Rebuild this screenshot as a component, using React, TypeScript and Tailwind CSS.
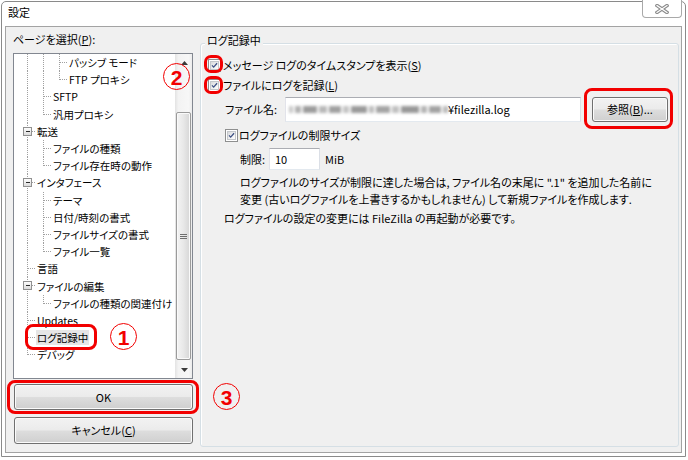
import React from "react";

type Cell = "v" | "T" | "L" | "TM" | " ";
type Row = { label: string; cells: Cell[]; selected?: boolean };

const rows: Row[] = [
  { label: "パッシブ モード", cells: ["v", "v", "T"] },
  { label: "FTP プロキシ", cells: ["v", "v", "L"] },
  { label: "SFTP", cells: ["v", "T"] },
  { label: "汎用プロキシ", cells: ["v", "L"] },
  { label: "転送", cells: ["TM"] },
  { label: "ファイルの種類", cells: ["v", "T"] },
  { label: "ファイル存在時の動作", cells: ["v", "L"] },
  { label: "インタフェース", cells: ["TM"] },
  { label: "テーマ", cells: ["v", "T"] },
  { label: "日付/時刻の書式", cells: ["v", "T"] },
  { label: "ファイルサイズの書式", cells: ["v", "T"] },
  { label: "ファイル一覧", cells: ["v", "L"] },
  { label: "言語", cells: ["T"] },
  { label: "ファイルの編集", cells: ["TM"] },
  { label: "ファイルの種類の関連付け", cells: ["v", "L"] },
  { label: "Updates", cells: ["T"] },
  { label: "ログ記録中", cells: ["T"], selected: true },
  { label: "デバッグ", cells: ["L"] },
];

const blurBits = [
  { w: 4, c: "#c8c8c8" },
  { w: 6, c: "#b0b0b0" },
  { w: 14, c: "#9c9c9c" },
  { w: 8, c: "#b8b8b8" },
  { w: 12, c: "#a0a0a0" },
  { w: 6, c: "#c4c4c4" },
  { w: 16, c: "#9a9a9a" },
  { w: 5, c: "#bcbcbc" },
  { w: 14, c: "#a4a4a4" },
  { w: 7, c: "#c0c0c0" },
  { w: 18, c: "#989898" },
  { w: 6, c: "#b4b4b4" },
  { w: 12, c: "#a2a2a2" },
  { w: 8, c: "#bababa" },
  { w: 10, c: "#9e9e9e" },
];

function TreeCell({ c }: { c: Cell }) {
  const dot = { stroke: "#a0a0a0", strokeWidth: 1, strokeDasharray: "1 1", shapeRendering: "crispEdges" as const };
  return (
    <svg width="16" height="17" viewBox="0 0 16 17" preserveAspectRatio="none" className="shrink-0 h-full w-[16px]">
      {c === "v" && <line x1="8.5" y1="0" x2="8.5" y2="17" style={dot} />}
      {(c === "T" || c === "TM") && <line x1="8.5" y1="0" x2="8.5" y2="17" style={dot} />}
      {c === "L" && <line x1="8.5" y1="0" x2="8.5" y2="9" style={dot} />}
      {(c === "T" || c === "L") && <line x1="9" y1="8.5" x2="16" y2="8.5" style={dot} />}
      {c === "TM" && (
        <>
          <line x1="13" y1="8.5" x2="16" y2="8.5" style={dot} />
          <defs>
            <linearGradient id="mb" x1="0" y1="0" x2="0" y2="1">
              <stop offset="0" stopColor="#ffffff" />
              <stop offset="1" stopColor="#d8d8d8" />
            </linearGradient>
          </defs>
          <rect x="4.5" y="4.5" width="8" height="8" fill="url(#mb)" stroke="#919191" shapeRendering="crispEdges" />
          <line x1="6.5" y1="8.5" x2="11" y2="8.5" stroke="#2b2b2b" shapeRendering="crispEdges" />
        </>
      )}
    </svg>
  );
}

function CheckBox() {
  return (
    <div className="w-[13px] h-[13px] shrink-0 border border-[#8e8f8f] bg-white p-[1px]">
      <div className="w-full h-full border border-[#c4c7cb] bg-[linear-gradient(135deg,#d8dadd_0%,#f4f4f4_70%,#ffffff_100%)]">
        <svg viewBox="0 0 9 9" className="w-full h-full">
          <path d="M1.3 4.3 L3.4 6.6 L7.8 1.6" fill="none" stroke="#3c4f83" strokeWidth="1.6" />
        </svg>
      </div>
    </div>
  );
}

const btn =
  "border border-[#707070] rounded-[3px] bg-[linear-gradient(#f2f2f2_0%,#ebebeb_48%,#dddddd_52%,#cfcfcf_100%)] shadow-[inset_0_0_0_1px_#fbfbfb] flex items-center justify-center text-black";

function Circled({ n, cls }: { n: string; cls: string }) {
  return (
    <div
      className={
        "absolute w-[27px] h-[27px] rounded-full border-[1.5px] border-[#f20000] flex items-center justify-center text-[#f20000] text-[21px] font-bold leading-none [font-family:'Liberation_Sans',sans-serif] " +
        cls
      }
    >
      <span className="mt-[1px]">{n}</span>
    </div>
  );
}

export default function App() {
  return (
    <div className="w-[688px] h-[460px] bg-white relative overflow-hidden text-[11px] text-black [font-family:'Noto_Sans_CJK_JP',sans-serif] [font-feature-settings:'palt']">
      <div className="ml-[1px] mt-[1px] w-[685px] h-[456px] border border-[#8a8a8a] rounded-t-[5px] bg-white flex flex-col px-[3px] pb-[3px]">
        {/* title */}
        <div className="h-[24px] flex items-start shrink-0">
          <span className="pl-[3px] pt-[3px] text-[11px] leading-[14px]">設定</span>
          <div className="flex-1" />
          <div className="-mt-[2px] w-[40px] h-[18px] border border-t-0 border-[#a9a9a9] rounded-b-[4px] bg-white flex items-center justify-center">
            <svg width="14" height="10" viewBox="0 0 14 10">
              <path d="M2 1.5 L12 8.5 M12 1.5 L2 8.5" stroke="#8c8c8c" strokeWidth="3.4" strokeLinecap="square" />
              <path d="M2 1.5 L12 8.5 M12 1.5 L2 8.5" stroke="#ffffff" strokeWidth="1.2" strokeLinecap="square" />
            </svg>
          </div>
        </div>
        {/* client */}
        <div className="flex-1 border border-[#a3a3a3] bg-[#f0f0f0] flex pl-[7px] pr-[2px] pt-[5px] min-h-0">
          {/* left */}
          <div className="w-[180px] flex flex-col shrink-0">
            <div className="leading-[14px] h-[14px]">ページを選択(<span className="underline">P</span>):</div>
            <div className="mt-[7px] h-[326px] border border-[#828790] bg-white flex">
              <div className="flex-1 flex flex-col pl-[5px] overflow-hidden text-[10.5px]">
                {rows.map((r, i) => (
                  <div key={i} className="h-[17.2px] flex items-center shrink-0">
                    {r.cells.map((c, j) => (
                      <TreeCell key={j} c={c} />
                    ))}
                    <span
                      className={
                        "ml-[1px] whitespace-nowrap leading-[15px] px-[1px] " + (r.selected ? "bg-[#e6e6e6]" : "")
                      }
                    >
                      {r.label}
                    </span>
                  </div>
                ))}
              </div>
              {/* scrollbar */}
              <div className="w-[17px] shrink-0 flex flex-col bg-[linear-gradient(90deg,#e3e3e3_0%,#f3f3f3_20%,#f7f7f7_80%,#ececec_100%)]">
                <div className="h-[17px] flex items-center justify-center">
                  <svg width="7" height="4" viewBox="0 0 7 4" className="ml-[2px]">
                    <path d="M0 4 L3.5 0 L7 4 Z" fill="#3a3a3a" />
                  </svg>
                </div>
                <div className="flex-1 flex flex-col px-[1px]">
                  <div className="mt-[41px] h-[248px] border border-[#9b9b9b] rounded-[2px] bg-[linear-gradient(90deg,#f4f4f4_0%,#e8e8e8_50%,#d6d6d6_100%)] shadow-[inset_0_0_0_1px_#fafafa] flex items-center justify-center">
                    <svg width="7" height="7" viewBox="0 0 7 7">
                      <path d="M0 1.5 H7 M0 3.5 H7 M0 5.5 H7" stroke="#6e6e6e" strokeWidth="1" />
                    </svg>
                  </div>
                </div>
                <div className="h-[17px] flex items-center justify-center">
                  <svg width="7" height="4" viewBox="0 0 7 4" className="ml-[2px]">
                    <path d="M0 0 L3.5 4 L7 0 Z" fill="#3a3a3a" />
                  </svg>
                </div>
              </div>
            </div>
            <div className={"mt-[5px] ml-[1px] h-[26px] " + btn}>OK</div>
            <div className={"mt-[7px] ml-[1px] h-[27px] " + btn}>
              キャンセル(<span className="underline">C</span>)
            </div>
          </div>
          {/* right */}
          <div className="flex-1 ml-[7px] min-w-0">
            <div className="mt-[11px] h-[404px] border border-[#d5dfe5] rounded-[3px] shadow-[inset_1px_1px_0_#ffffff] flex flex-col">
              <div className="-mt-[11px] ml-[4px] px-[2px] w-fit bg-[#f0f0f0] leading-[14px] h-[14px]">ログ記録中</div>
              <div className="mt-[9px] h-[18px] pl-[7px] flex items-center">
                <CheckBox />
                <span className="ml-[2px] leading-[14px]">
                  メッセージ ログのタイムスタンプを表示(<span className="underline">S</span>)
                </span>
              </div>
              <div className="mt-[2px] h-[18px] pl-[7px] flex items-center">
                <CheckBox />
                <span className="ml-[2px] leading-[14px]">
                  ファイルにログを記録(<span className="underline">L</span>)
                </span>
              </div>
              <div className="mt-[3px] h-[25px] pl-[24px] flex items-center">
                <span className="w-[60px] shrink-0">ファイル名:</span>
                <div className="w-[296px] h-[25px] border border-[#abadb3] border-l-[#e2e3ea] border-r-[#dbdfe6] border-b-[#e3e9ef] bg-white flex items-center pl-[3px] overflow-hidden whitespace-nowrap">
                  <div className="w-[159px] h-[8px] flex items-center gap-[2px] blur-[1.4px] shrink-0 overflow-hidden">
                    {blurBits.map((b, i) => (
                      <div key={i} className="h-[7px] shrink-0" style={{ width: b.w, background: b.c }} />
                    ))}
                  </div>
                  <span>¥filezilla.log</span>
                </div>
                <div className={"ml-[11px] w-[76px] h-[25px] " + btn}>
                  参照(<span className="underline">B</span>)...
                </div>
              </div>
              <div className="mt-[5px] h-[16px] pl-[24px] flex items-center">
                <CheckBox />
                <span className="ml-[1px] leading-[14px]">ログファイルの制限サイズ</span>
              </div>
              <div className="mt-[5px] h-[22px] pl-[39px] flex items-center">
                <span className="w-[29px] shrink-0">制限:</span>
                <div className="w-[51px] h-[22px] border border-[#abadb3] border-l-[#e2e3ea] border-r-[#dbdfe6] border-b-[#e3e9ef] bg-white flex items-center pl-[5px]">
                  10
                </div>
                <span className="ml-[5px]">MiB</span>
              </div>
              <div className="mt-[4px] pl-[39px] leading-[17px] whitespace-nowrap">
                ログファイルのサイズが制限に達した場合は, ファイル名の末尾に ".1" を追加した名前に
                <br />
                変更 (古いログファイルを上書きするかもしれません) して新規ファイルを作成します.
              </div>
              <div className="mt-[2px] pl-[23px] leading-[17px] whitespace-nowrap">
                ログファイルの設定の変更には FileZilla の再起動が必要です。
              </div>
            </div>
          </div>
        </div>
      </div>

      {/* annotations */}
      <div className="absolute left-[204px] top-[55px] w-[19px] h-[18px] border-[3px] border-[#f20000] rounded-[7px]" />
      <div className="absolute left-[204px] top-[76px] w-[19px] h-[18px] border-[3px] border-[#f20000] rounded-[7px]" />
      <div className="absolute left-[584px] top-[88px] w-[89px] h-[41px] border-[3px] border-[#f20000] rounded-[8px]" />
      <div className="absolute left-[25px] top-[324px] w-[72px] h-[26px] border-[3px] border-[#f20000] rounded-[8px]" />
      <div className="absolute left-[7px] top-[380px] w-[192px] h-[34px] border-[3px] border-[#f20000] rounded-[8px]" />
      <Circled n="2" cls="left-[163px] top-[63px]" />
      <Circled n="1" cls="left-[110px] top-[323px]" />
      <Circled n="3" cls="left-[213px] top-[383px]" />
    </div>
  );
}
